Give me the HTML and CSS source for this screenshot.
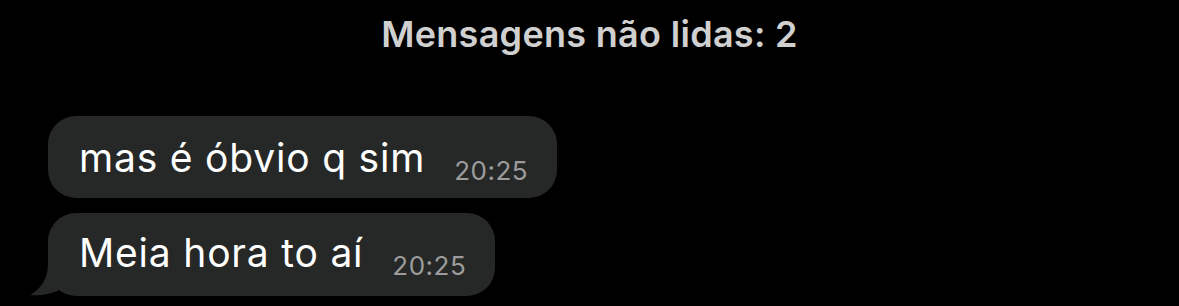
FILE: index.html
```html
<!DOCTYPE html>
<html lang="pt-BR">
<head>
    <meta charset="UTF-8">
    <title>Chat</title>
    <link rel="stylesheet" href="styles.css">
</head>
<body>
    <div class="chat">
        <p class="unread">Mensagens não lidas: 2</p>
        <div class="messages">
            <div class="bubble">
                <span class="text">mas é óbvio q sim</span><span class="time">20:25</span>
            </div>
            <div class="bubble last">
                <svg class="tail" width="32" height="56" viewBox="0 0 32 56">
                    <path d="M20 0 L20 23 C20 38 14 48 2 55 C12 56 24 54 31 50 L31 0 Z" fill="#262828"/>
                </svg>
                <span class="text">Meia hora to aí</span><span class="time">20:25</span>
            </div>
        </div>
    </div>
</body>
</html>
```

FILE: styles.css
```css
* {
    margin: 0;
    padding: 0;
    box-sizing: border-box;
}
body {
    background-color: #000;
    font-family: Inter, "Noto Sans", sans-serif;
    width: 1179px;
    height: 306px;
    overflow: hidden;
}
.chat {
    display: flex;
    flex-direction: column;
}
.unread {
    text-align: center;
    color: #d0d0d0;
    font-size: 36px;
    font-weight: 600;
    letter-spacing: 0.3px;
    line-height: 44px;
    padding-top: 12px;
    height: 116px;
}
.messages {
    display: flex;
    flex-direction: column;
    align-items: flex-start;
    gap: 15px;
    padding-left: 48px;
}
.bubble {
    position: relative;
    background-color: #262828;
    border-radius: 28px;
    height: 82px;
    padding: 22px 29px 0 31px;
    line-height: 40px;
    white-space: nowrap;
}
.bubble.last {
    height: 83px;
    padding-top: 20px;
}
.text {
    color: #fff;
    font-size: 39px;
    letter-spacing: 0.8px;
}
.time {
    color: #9c9c9c;
    font-size: 26px;
    letter-spacing: 0.5px;
    margin-left: 29px;
    vertical-align: -8px;
}
.tail {
    position: absolute;
    left: -20px;
    bottom: 0;
}
```
